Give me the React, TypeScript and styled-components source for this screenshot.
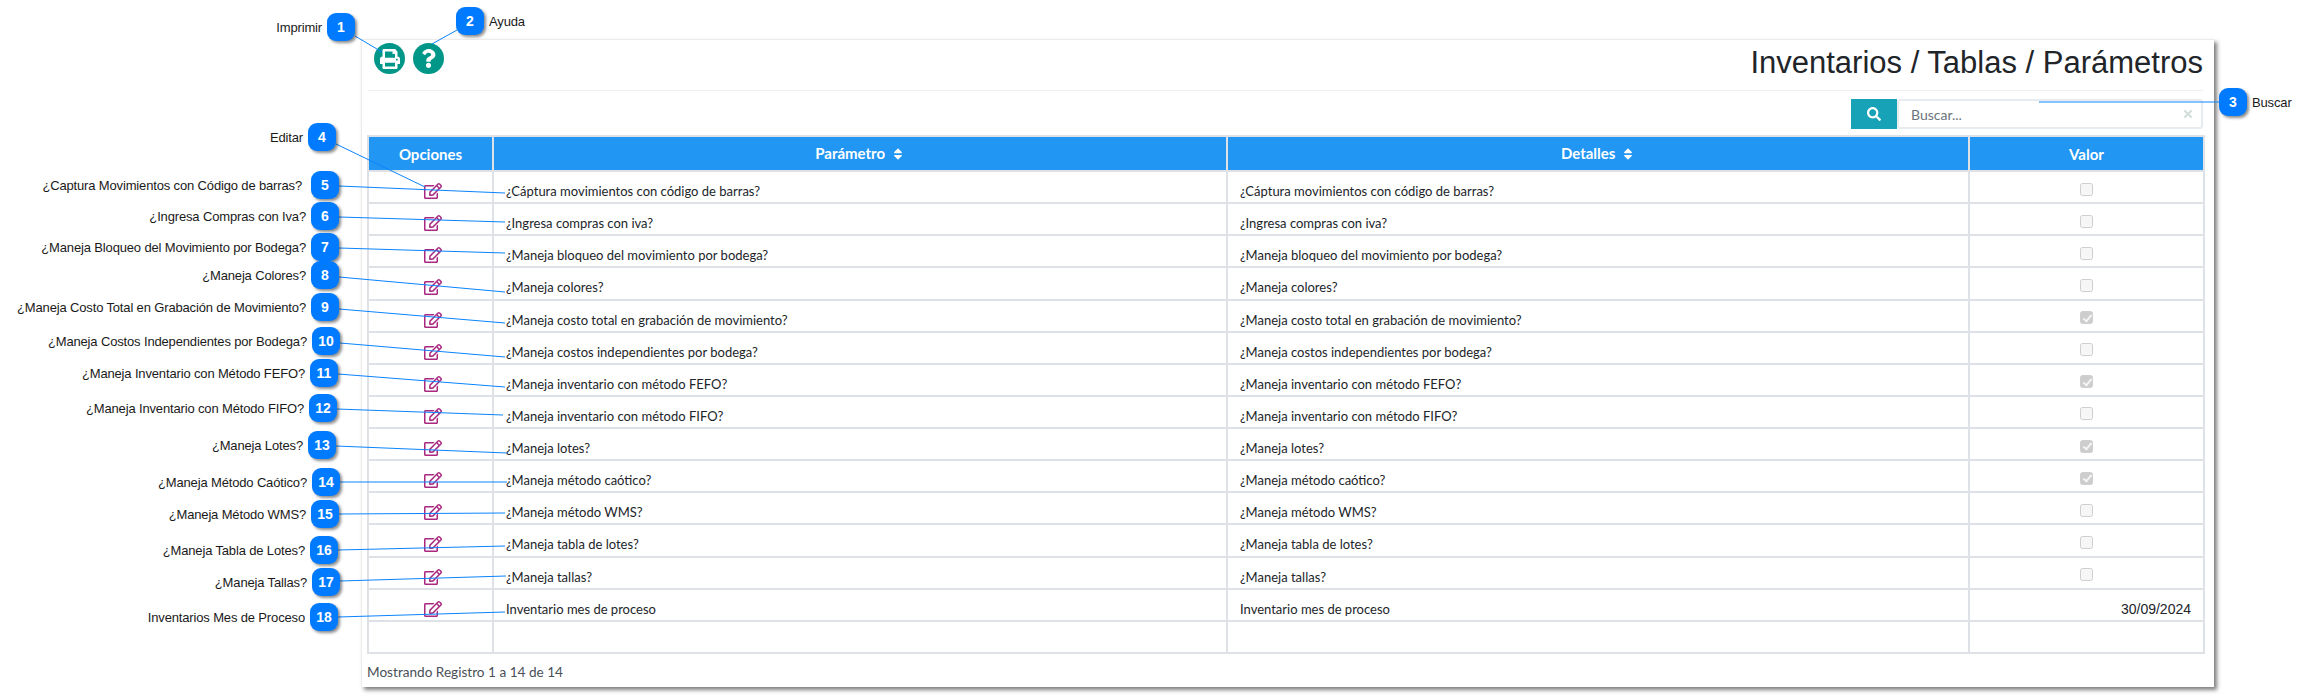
import React from "react";
import styled, { createGlobalStyle } from "styled-components";
import { FaPrint, FaQuestion, FaRegEdit, FaSearch, FaSort, FaTimes } from "react-icons/fa";

const PAGE_WIDTH = 2309;

const rows = [
    { text: "¿Cáptura movimientos con código de barras?", checked: false },
    { text: "¿Ingresa compras con iva?", checked: false },
    { text: "¿Maneja bloqueo del movimiento por bodega?", checked: false },
    { text: "¿Maneja colores?", checked: false },
    { text: "¿Maneja costo total en grabación de movimiento?", checked: true },
    { text: "¿Maneja costos independientes por bodega?", checked: false },
    { text: "¿Maneja inventario con método FEFO?", checked: true },
    { text: "¿Maneja inventario con método FIFO?", checked: false },
    { text: "¿Maneja lotes?", checked: true },
    { text: "¿Maneja método caótico?", checked: true },
    { text: "¿Maneja método WMS?", checked: false },
    { text: "¿Maneja tabla de lotes?", checked: false },
    { text: "¿Maneja tallas?", checked: false },
    { text: "Inventario mes de proceso", value: "30/09/2024" },
];

// n, etiqueta, centro del globo y línea hasta el elemento señalado
const callouts = [
    { n: 1, label: "Imprimir", x: 341, y: 27, line: [355, 36, 382, 52] },
    { n: 2, label: "Ayuda", x: 470, y: 21, line: [457, 30, 432, 44], right: true },
    { n: 3, label: "Buscar", x: 2233, y: 102, line: [2219, 102, 2039, 102], right: true },
    { n: 4, label: "Editar", x: 322, y: 137, line: [336, 144, 425, 187] },
    { n: 5, label: "¿Captura Movimientos con Código de barras?", x: 325, y: 185, line: [339, 186, 505, 193], gap: 9 },
    { n: 6, label: "¿Ingresa Compras con Iva?", x: 325, y: 216, line: [339, 217, 505, 222] },
    { n: 7, label: "¿Maneja Bloqueo del Movimiento por Bodega?", x: 325, y: 247, line: [339, 248, 505, 253] },
    { n: 8, label: "¿Maneja Colores?", x: 325, y: 275, line: [339, 277, 505, 292] },
    { n: 9, label: "¿Maneja Costo Total en Grabación de Movimiento?", x: 325, y: 307, line: [339, 309, 505, 323] },
    { n: 10, label: "¿Maneja Costos Independientes por Bodega?", x: 326, y: 341, line: [340, 343, 505, 357] },
    { n: 11, label: "¿Maneja Inventario con Método FEFO?", x: 324, y: 373, line: [338, 374, 505, 387] },
    { n: 12, label: "¿Maneja Inventario con Método FIFO?", x: 323, y: 408, line: [337, 409, 503, 415] },
    { n: 13, label: "¿Maneja Lotes?", x: 322, y: 445, line: [336, 446, 507, 453] },
    { n: 14, label: "¿Maneja Método Caótico?", x: 326, y: 482, line: [340, 482, 507, 482] },
    { n: 15, label: "¿Maneja Método WMS?", x: 325, y: 514, line: [339, 514, 505, 513] },
    { n: 16, label: "¿Maneja Tabla de Lotes?", x: 324, y: 550, line: [338, 550, 505, 546] },
    { n: 17, label: "¿Maneja Tallas?", x: 326, y: 582, line: [340, 581, 506, 576] },
    { n: 18, label: "Inventarios Mes de Proceso", x: 324, y: 617, line: [338, 617, 505, 612] },
];

export default function App() {
    return (
        <Page>
            <GlobalStyle />
            <Panel>
                <PanelHeader>
                    <Tools>
                        <RoundButton><FaPrint size={20} /></RoundButton>
                        <RoundButton><FaQuestion size={19} /></RoundButton>
                    </Tools>
                    <Title>Inventarios / Tablas / Parámetros</Title>
                </PanelHeader>

                <SearchRow>
                    <SearchButton><FaSearch size={14} /></SearchButton>
                    <SearchBox>
                        <SearchInput placeholder="Buscar..." readOnly />
                        <ClearIcon><FaTimes size={12} /></ClearIcon>
                    </SearchBox>
                </SearchRow>

                <Table>
                    <colgroup>
                        <col width={125} />
                        <col width={734} />
                        <col width={742} />
                        <col width={235} />
                    </colgroup>
                    <thead>
                        <tr>
                            <Th>Opciones</Th>
                            <Th>Parámetro <SortIcon><FaSort size={14} /></SortIcon></Th>
                            <Th>Detalles <SortIcon><FaSort size={14} /></SortIcon></Th>
                            <Th>Valor</Th>
                        </tr>
                    </thead>
                    <tbody>
                        {rows.map((row) => (
                            <tr key={row.text}>
                                <OptionCell><EditIcon><FaRegEdit size={18} /></EditIcon></OptionCell>
                                <Td>{row.text}</Td>
                                <Td>{row.text}</Td>
                                {row.value ? (
                                    <DateCell>{row.value}</DateCell>
                                ) : (
                                    <ValueCell><Check type="checkbox" disabled checked={row.checked} readOnly /></ValueCell>
                                )}
                            </tr>
                        ))}
                        <tr>
                            <Td />
                            <Td />
                            <Td />
                            <Td />
                        </tr>
                    </tbody>
                </Table>

                <Footer>Mostrando Registro 1 a 14 de 14</Footer>
            </Panel>

            {/* anotaciones del manual sobre la captura */}
            <Lines width={PAGE_WIDTH} height={696}>
                {callouts.map((c) => (
                    <line key={c.n} x1={c.line[0]} y1={c.line[1]} x2={c.line[2]} y2={c.line[3]} stroke="#0a84ff" strokeWidth={1} />
                ))}
            </Lines>
            {callouts.map((c) => (
                <Callout key={c.n} $x={c.x} $y={c.y} $right={!!c.right} $gap={c.gap ?? 5}>
                    <Badge>{c.n}</Badge>
                    <CalloutLabel>{c.label}</CalloutLabel>
                </Callout>
            ))}
        </Page>
    );
}

/* ================== styled-components ================== */

const GlobalStyle = createGlobalStyle`
    html, body {
        margin: 0;
        padding: 0;
        background: #fff;
    }
`;

const Page = styled.div`
    position: relative;
    width: 2309px;
    height: 696px;
    padding: 39px 0 0 361px;
    box-sizing: border-box;
    overflow: hidden;
    font-family: Lato, "Liberation Sans", sans-serif;
    font-size: 13px;
    color: #212529;
`;

const Panel = styled.div`
    width: 1853px;
    height: 648px;
    box-sizing: border-box;
    padding: 0 11px 0 4px;
    background: #fff;
    border-top: 1px solid #ececec;
    border-left: 1px solid #ececec;
    box-shadow: 3px 3px 4px rgba(0, 0, 0, 0.5);
`;

const PanelHeader = styled.div`
    height: 51px;
    box-sizing: border-box;
    margin-left: 2px;
    border-bottom: 1px solid #eeeeee;
    display: flex;
    justify-content: space-between;
    align-items: flex-start;
`;

const Tools = styled.div`
    display: flex;
    gap: 8px;
    padding: 3px 0 0 6px;
`;

const RoundButton = styled.div`
    width: 31px;
    height: 31px;
    border-radius: 50%;
    background: #009688;
    color: #fff;
    display: flex;
    align-items: center;
    justify-content: center;
`;

const Title = styled.h1`
    margin: 3px 0 0;
    font-family: "Liberation Sans", Arial, sans-serif;
    font-size: 31px;
    line-height: 40px;
    font-weight: 400;
    color: #212529;
`;

const SearchRow = styled.div`
    display: flex;
    justify-content: flex-end;
    margin-top: 8px;
    height: 30px;
`;

const SearchButton = styled.div`
    width: 46px;
    background: #17a2b8;
    color: #fff;
    display: flex;
    align-items: center;
    justify-content: center;
`;

const SearchBox = styled.div`
    position: relative;
    width: 306px;
`;

const SearchInput = styled.input`
    width: 100%;
    height: 100%;
    box-sizing: border-box;
    border: 2px solid #e9ecef;
    border-radius: 3px;
    padding: 0 12px;
    font-family: Lato, sans-serif;
    font-size: 14px;
    outline: none;

    &::placeholder {
        color: #6c757d;
        opacity: 1;
    }
`;

const ClearIcon = styled.span`
    position: absolute;
    right: 9px;
    top: 9px;
    color: #d4e0db;
    display: flex;
`;

const Table = styled.table`
    width: 1836px;
    margin: 6px 0 0 1px;
    table-layout: fixed;
    border-collapse: collapse;
    border: 2px solid #dee2e6;
`;

const Th = styled.th`
    height: 35px;
    padding: 0;
    box-sizing: border-box;
    background: #2196f3;
    border: 2px solid #dee2e6;
    color: #fff;
    font-size: 15px;
    font-weight: 700;
    text-align: center;
`;

const SortIcon = styled.span`
    margin-left: 2px;
    vertical-align: -2px;
`;

const Td = styled.td`
    height: 32.13px;
    box-sizing: border-box;
    padding: 8px 12px 0;
    border: 2px solid #dee2e6;
    font-size: 13px;
    line-height: 20px;
    color: #212529;
    vertical-align: middle;
`;

const OptionCell = styled(Td)`
    padding: 8px 0 0 5px;
`;

const ValueCell = styled(Td)`
    padding: 4px 0 0;
`;

const DateCell = styled(Td)`
    font-family: "Liberation Sans", Arial, sans-serif;
    font-size: 14px;
    text-align: right;
`;

const EditIcon = styled.span`
    color: #a8297f;
    display: flex;
    justify-content: center;
`;

const Check = styled.input`
    appearance: none;
    position: relative;
    display: block;
    width: 13px;
    height: 13px;
    margin: 0 auto;
    box-sizing: border-box;
    border: 1px solid #cfcfcf;
    border-radius: 2.5px;
    background: #f6f6f6;

    &:checked {
        background: #cdcdcd;
    }

    &:checked::after {
        content: "";
        position: absolute;
        left: 3.5px;
        top: 0.5px;
        width: 3px;
        height: 7px;
        border: solid #f4f4f4;
        border-width: 0 2px 2px 0;
        transform: rotate(40deg);
    }
`;

const Footer = styled.div`
    margin: 8px 0 0 1px;
    font-size: 13.6px;
    line-height: 20px;
    color: #495057;
`;

const Lines = styled.svg`
    position: absolute;
    left: 0;
    top: 0;
    pointer-events: none;
`;

const Callout = styled.div<{ $x: number; $y: number; $right: boolean; $gap: number }>`
    position: absolute;
    top: ${({ $y }) => $y - 14}px;
    display: flex;
    align-items: center;
    gap: ${({ $gap }) => $gap}px;
    flex-direction: ${({ $right }) => ($right ? "row" : "row-reverse")};
    ${({ $right, $x }) => ($right ? `left: ${$x - 14}px;` : `right: ${PAGE_WIDTH - $x - 14}px;`)}
`;

const Badge = styled.div`
    width: 28px;
    height: 28px;
    border-radius: 9px;
    background: #007bff;
    box-shadow: 2px 2px 3px rgba(0, 0, 0, 0.45);
    color: #fff;
    font-family: "Liberation Sans", Arial, sans-serif;
    font-size: 14px;
    font-weight: 700;
    display: flex;
    align-items: center;
    justify-content: center;
`;

const CalloutLabel = styled.span`
    font-family: "Liberation Sans", Arial, sans-serif;
    font-size: 13px;
    letter-spacing: -0.15px;
    color: #1a1a1a;
    white-space: nowrap;
`;
